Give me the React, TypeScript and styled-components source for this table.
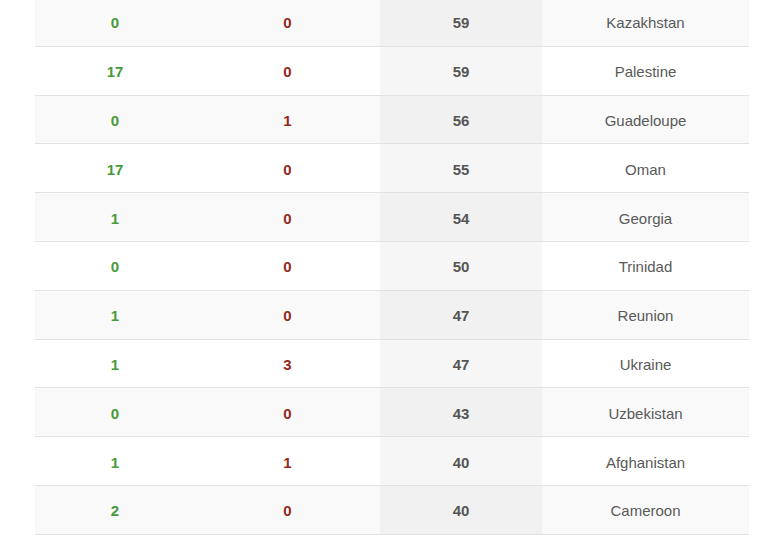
import React from "react";
import styled, { createGlobalStyle } from "styled-components";

const GlobalStyle = createGlobalStyle`
html, body {
    margin: 0;
    padding: 0;
    background: #fff;
}
body {
    font-family: "Liberation Sans", Arial, sans-serif;
}
`;

interface ICountryRow {
    recovered: number;
    deaths: number;
    cases: number;
    country: string;
}

const rows: Array<ICountryRow> = [
    { recovered: 0, deaths: 0, cases: 59, country: "Kazakhstan" },
    { recovered: 17, deaths: 0, cases: 59, country: "Palestine" },
    { recovered: 0, deaths: 1, cases: 56, country: "Guadeloupe" },
    { recovered: 17, deaths: 0, cases: 55, country: "Oman" },
    { recovered: 1, deaths: 0, cases: 54, country: "Georgia" },
    { recovered: 0, deaths: 0, cases: 50, country: "Trinidad" },
    { recovered: 1, deaths: 0, cases: 47, country: "Reunion" },
    { recovered: 1, deaths: 3, cases: 47, country: "Ukraine" },
    { recovered: 0, deaths: 0, cases: 43, country: "Uzbekistan" },
    { recovered: 1, deaths: 1, cases: 40, country: "Afghanistan" },
    { recovered: 2, deaths: 0, cases: 40, country: "Cameroon" },
];

const Page = styled.div`
overflow: hidden;
height: 538px;
`;

const Table = styled.div`
width: 714px;
margin: -2px 0 0 35px;
`;

const Row = styled.div<{ $striped?: boolean }>`
display: grid;
grid-template-columns: 160px 185px 162px 207px;
height: 47.8px;
border-bottom: 1px solid #e2e2e2;
background: ${props => props.$striped ? "#f9f9f9" : "#fff"};
`;

type Tone = "green" | "red" | "total" | "name";

const toneColour: Record<Tone, string> = {
    green: "#489a3c",
    red: "#922a22",
    total: "#555",
    name: "#595959",
};

const Cell = styled.div<{ $tone: Tone; $shade?: string }>`
display: flex;
align-items: center;
justify-content: center;
padding-top: 2px;
font-size: 15px;
font-weight: ${props => props.$tone === "name" ? 400 : 700};
color: ${props => toneColour[props.$tone]};
background: ${props => props.$shade || "transparent"};
`;

export default function App() {
    return <Page>
        <GlobalStyle />
        <Table>
            {rows.map((r, i) =>
                <Row key={r.country} $striped={i % 2 === 0}>
                    <Cell $tone="green">{r.recovered}</Cell>
                    <Cell $tone="red">{r.deaths}</Cell>
                    <Cell $tone="total" $shade={i % 2 === 0 ? "#f1f1f1" : "#f6f6f6"}>{r.cases}</Cell>
                    <Cell $tone="name">{r.country}</Cell>
                </Row>
            )}
        </Table>
    </Page>
}
